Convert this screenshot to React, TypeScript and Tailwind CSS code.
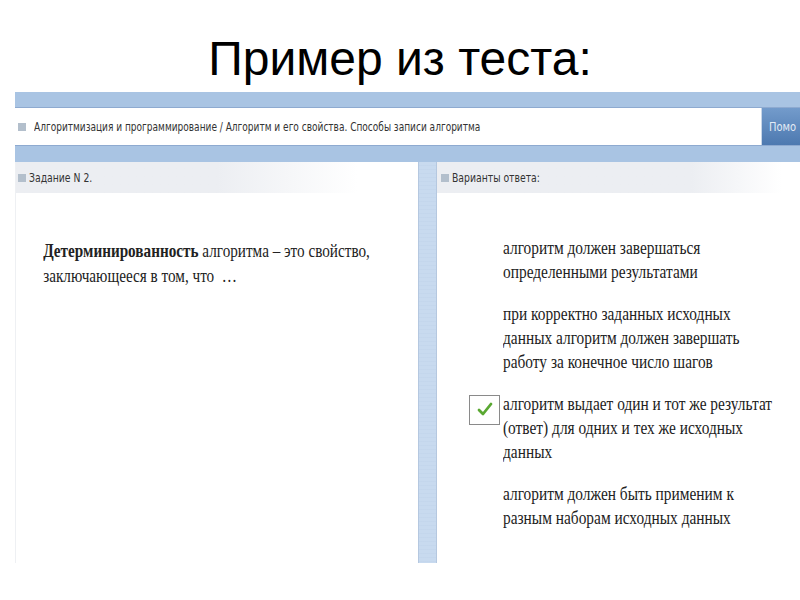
import React from "react";

const narrow = "font-['Liberation_Sans_Narrow','DejaVu_Sans_Condensed','Liberation_Sans',sans-serif]";
const serif = "font-['Liberation_Serif','Times_New_Roman',serif]";

const answers = [
  { lines: ["алгоритм должен завершаться", "определенными результатами"], checked: false },
  {
    lines: ["при корректно заданных исходных", "данных алгоритм должен завершать", "работу за конечное число шагов"],
    checked: false,
  },
  {
    lines: ["алгоритм выдает один и тот же результат", "(ответ) для одних и тех же исходных", "данных"],
    checked: true,
  },
  { lines: ["алгоритм должен быть применим к", "разным наборам исходных данных"], checked: false },
];

const Bullet: React.FC = () => <span className="inline-block w-[8px] h-[8px] bg-[#b3bfcc] shrink-0" />;

const App: React.FC = () => {
  return (
    <div className="w-[800px] h-[600px] bg-white overflow-hidden">
      <div className="h-[92px] pt-[35px] text-center text-[48px] leading-none text-black font-['Liberation_Sans',Arial,sans-serif]">
        Пример из теста:
      </div>

      <div className="ml-[15px]">
        {/* top band */}
        <div className="h-[16px] bg-[#a9c4e3] border-b border-[#8eaad0]" />

        {/* breadcrumb row */}
        <div className="flex h-[37px]">
          <div className="flex-1 min-w-0 flex items-center gap-[8px] pl-[3px] bg-white border-r border-[#c8d6e8] overflow-hidden">
            <Bullet />
            <span className={`${narrow} inline-block origin-left scale-x-[0.835] text-[12px] text-[#333] whitespace-nowrap`}>
              Алгоритмизация и программирование / Алгоритм и его свойства. Способы записи алгоритма
            </span>
          </div>
          <div className="w-[38px] shrink-0 overflow-hidden flex items-center pl-[7px] bg-gradient-to-b from-[#739bcb] to-[#4d79b0]">
            <span className={`${narrow} inline-block origin-left scale-x-[0.85] text-[13px] text-[#e3ebf5] whitespace-nowrap`}>
              Помо
            </span>
          </div>
        </div>

        {/* panels */}
        <div className="flex h-[418px] pt-[16px] bg-[#a9c4e3] border-t border-[#8eaad0]">
          {/* left */}
          <div className="w-[403px] shrink-0 bg-white border-l border-[#eef0f3] flex flex-col overflow-hidden">
            <div className="h-[31px] flex items-center gap-[3px] pl-[2px] bg-gradient-to-r from-[#eceef2] from-50% to-white to-[85%]">
              <Bullet />
              <span className={`${narrow} inline-block origin-left scale-x-[0.86] text-[12px] text-[#333]`}>
                Задание N 2.
              </span>
            </div>
            <p
              className={`${serif} origin-left scale-x-[0.8] text-[19px] leading-[25px] text-[#222] mt-[45px] pl-[34px] whitespace-nowrap`}
            >
              <b>Детерминированность</b> алгоритма – это свойство,
              <br />
              заключающееся в том, что&nbsp; …
            </p>
          </div>

          {/* divider */}
          <div className="w-[19px] shrink-0 bg-[repeating-linear-gradient(180deg,#c8daef_0px,#c8daef_3px,#c0d3ea_4px)] border-x border-[#b5c8e0]" />

          {/* right */}
          <div className="flex-1 min-w-0 bg-white flex flex-col overflow-hidden">
            <div className="h-[31px] flex items-center gap-[3px] pl-[4px] bg-gradient-to-r from-[#eceef2] from-70% to-white to-[95%]">
              <Bullet />
              <span className={`${narrow} inline-block origin-left scale-x-[0.86] text-[12px] text-[#333]`}>
                Варианты ответа:
              </span>
            </div>
            <div className="mt-[43px] flex flex-col gap-[18px]">
              {answers.map((a, i) => (
                <div key={i} className="flex pl-[32px]">
                  <div className="w-[34px] shrink-0">
                    {a.checked && (
                      <div className="mt-[3px] w-[31px] h-[30px] border border-[#8a8a8a] bg-white flex items-start justify-center pt-[6px]">
                        <svg width="16" height="14" viewBox="0 0 16 14">
                          <path
                            d="M2 8 L6 12 L14 2"
                            fill="none"
                            stroke="#5aa832"
                            strokeWidth="2.8"
                            strokeLinecap="round"
                            strokeLinejoin="round"
                          />
                        </svg>
                      </div>
                    )}
                  </div>
                  <div className={`${serif} origin-left scale-x-[0.81] text-[19px] leading-[24px] text-[#222]`}>
                    {a.lines.map((l, j) => (
                      <div key={j} className="whitespace-nowrap">
                        {l}
                      </div>
                    ))}
                  </div>
                </div>
              ))}
            </div>
          </div>
        </div>
      </div>
    </div>
  );
};

export default App;
